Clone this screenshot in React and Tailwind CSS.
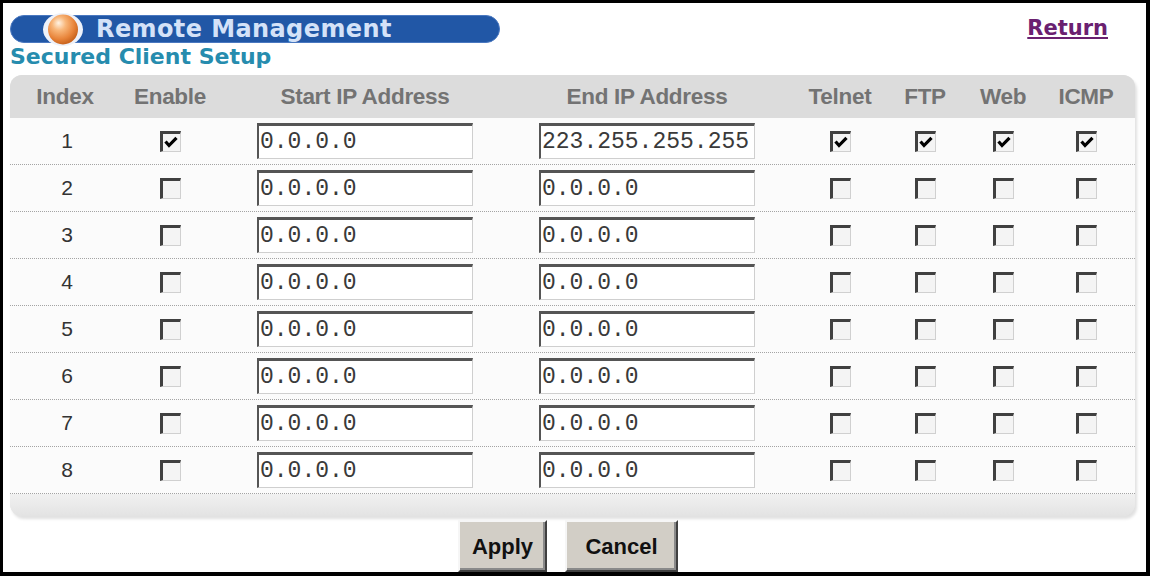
import React from "react";

const COLS = "grid grid-cols-[110px_100px_290px_274px_112px_58px_98px_68px_1fr] items-center";

function Check({ checked }) {
  return (
    <span className="inline-flex w-[21px] h-[21px] items-center justify-center bg-[#f4f4f4] border-t-[3px] border-l-[3px] border-r border-b border-t-[#404040] border-l-[#404040] border-r-[#d0d0d0] border-b-[#d0d0d0]">
      {checked && (
        <svg width="14" height="12" viewBox="0 0 14 12">
          <path d="M1.5 5.5 L5 9.5 L12.5 1.8" stroke="#000" strokeWidth="3.2" fill="none" strokeLinejoin="miter" />
        </svg>
      )}
    </span>
  );
}

function IpBox({ value }) {
  return (
    <div className="w-[216px] h-[36px] bg-white border-t-[3px] border-l-[2px] border-r border-b border-t-[#555555] border-l-[#555555] border-r-[#cfcfcf] border-b-[#cfcfcf] flex items-center pl-[1px] overflow-hidden">
      <span className="text-[23px] leading-none text-[#3a3a3a] whitespace-nowrap" style={{ fontFamily: '"Liberation Mono", monospace' }}>
        {value}
      </span>
    </div>
  );
}

const rows = [1, 2, 3, 4, 5, 6, 7, 8].map((i) => ({
  i,
  on: i === 1,
  start: "0.0.0.0",
  end: i === 1 ? "223.255.255.255" : "0.0.0.0",
}));

function Cell({ children }) {
  return <div className="flex justify-center items-center">{children}</div>;
}

export default function App() {
  const sans = { fontFamily: '"Liberation Sans", Arial, sans-serif' };
  const dv = { fontFamily: '"DejaVu Sans", Verdana, sans-serif' };
  return (
    <div className="w-[1150px] h-[576px] bg-white border-t-[3px] border-l-[3px] border-r-[4px] border-b-[4px] border-black overflow-hidden">
      <div className="pl-[7px] pr-[11px] pt-[12px]">
        <div className="flex justify-between items-start">
          <div className="w-[490px] h-[28px] rounded-full bg-[#2157a6] border border-[#4a78c0] flex items-center pl-[31px]">
            <svg width="42" height="33" viewBox="0 0 42 33" className="shrink-0">
              <defs>
                <radialGradient id="ball" cx="40%" cy="35%" r="65%" fx="35%" fy="28%">
                  <stop offset="0%" stopColor="#fff3e4" />
                  <stop offset="35%" stopColor="#f8b679" />
                  <stop offset="75%" stopColor="#e8843a" />
                  <stop offset="100%" stopColor="#c9641e" />
                </radialGradient>
              </defs>
              <ellipse cx="21" cy="16.5" rx="20" ry="16.5" fill="#eef2fa" />
              <circle cx="21" cy="16.5" r="15" fill="url(#ball)" />
            </svg>
            <span className="ml-[12px] text-[24px] leading-none font-bold text-[#d4e2f8] tracking-[0.4px] whitespace-nowrap" style={dv}>
              Remote Management
            </span>
          </div>
          <a href="#" className="mt-[1px] mr-[27px] text-[21px] leading-[24px] font-bold text-[#6a2070] underline" style={dv}>
            Return
          </a>
        </div>
        <div className="mt-[1px] h-[26px] text-[22px] leading-[26px] font-bold text-[#268cae] whitespace-nowrap" style={dv}>
          Secured Client Setup
        </div>

        <div className="mt-[5px] rounded-[12px] bg-[#e6e6e6] overflow-hidden shadow-[2px_3px_3px_rgba(0,0,0,0.12)]" style={sans}>
          <div className={`${COLS} h-[43px] bg-[#dcdcdc] text-[22.5px] font-bold text-[#737373] tracking-[-0.3px]`}>
            <div className="text-center">Index</div>
            <div className="text-center">Enable</div>
            <div className="text-center">Start IP Address</div>
            <div className="text-center">End IP Address</div>
            <div className="text-center">Telnet</div>
            <div className="text-center">FTP</div>
            <div className="text-center">Web</div>
            <div className="text-center">ICMP</div>
            <div />
          </div>
          <div className="bg-[#fbfbfb]">
            {rows.map((r) => (
              <div key={r.i} className={`${COLS} h-[47px] border-b border-dotted border-[#a4a4a4]`}>
                <div className="text-center text-[21px] text-[#333333] pl-[4px]">{r.i}</div>
                <Cell><Check checked={r.on} /></Cell>
                <Cell><IpBox value={r.start} /></Cell>
                <Cell><IpBox value={r.end} /></Cell>
                <Cell><Check checked={r.on} /></Cell>
                <Cell><Check checked={r.on} /></Cell>
                <Cell><Check checked={r.on} /></Cell>
                <Cell><Check checked={r.on} /></Cell>
                <div />
              </div>
            ))}
          </div>
          <div className="h-[22px] bg-gradient-to-b from-[#f1f1f1] to-[#e3e3e3]" />
        </div>

        <div className="mt-[4px] flex justify-center gap-[18px] pr-[9px]" style={sans}>
          <button className="w-[89px] h-[52px] bg-[#d2cec6] border-2 border-t-[#f6f6f6] border-l-[#f6f6f6] border-r-[#404040] border-b-[#404040] shadow-[inset_-2px_-2px_0_#8a8a8a] text-[22px] font-bold text-[#111111]">
            Apply
          </button>
          <button className="w-[113px] h-[52px] bg-[#d2cec6] border-2 border-t-[#f6f6f6] border-l-[#f6f6f6] border-r-[#404040] border-b-[#404040] shadow-[inset_-2px_-2px_0_#8a8a8a] text-[22px] font-bold text-[#111111]">
            Cancel
          </button>
        </div>
      </div>
    </div>
  );
}
